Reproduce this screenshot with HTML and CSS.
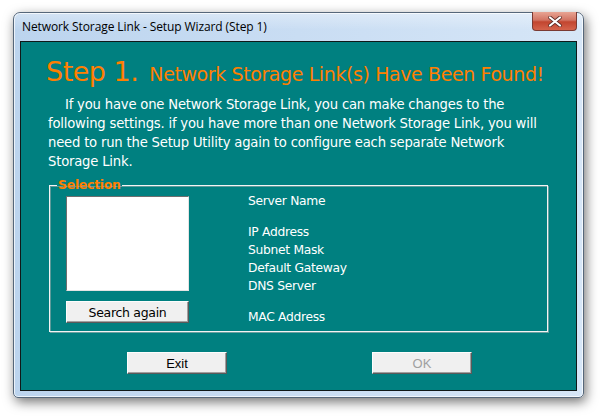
FILE: index.html
```html
<!DOCTYPE html>
<html>
<head>
<meta charset="utf-8">
<link rel="stylesheet" href="styles.css">
</head>
<body>
<div class="window">
  <div class="titlebar">
    <span class="title">Network Storage Link - Setup Wizard (Step 1)</span>
    <div class="close"><svg width="14" height="11" viewBox="0 0 14 11"><path d="M2 1.5 L12 9.5 M12 1.5 L2 9.5" stroke="#5a2a24" stroke-width="3.6" stroke-linecap="round"/><path d="M2 1.5 L12 9.5 M12 1.5 L2 9.5" stroke="#fff" stroke-width="2.2" stroke-linecap="round"/></svg></div>
  </div>
  <div class="client">
    <h1 class="heading"><span class="step">Step 1.</span><span class="found">Network Storage Link(s) Have Been Found!</span></h1>
    <p class="intro">If you have one Network Storage Link, you can make changes to the<br>following settings. if you have more than one Network Storage Link, you will<br>need to run the Setup Utility again to configure each separate Network<br>Storage Link.</p>
    <fieldset class="selection">
      <legend>Selection</legend>
      <div class="left-col">
        <div class="listbox"></div>
        <button class="btn search">Search again</button>
      </div>
      <div class="fields">
        <div class="field">Server Name</div>
        <div class="field gap">IP Address</div>
        <div class="field">Subnet Mask</div>
        <div class="field">Default Gateway</div>
        <div class="field">DNS Server</div>
        <div class="field gap">MAC Address</div>
      </div>
    </fieldset>
    <div class="actions">
      <button class="btn sys">Exit</button>
      <button class="btn sys disabled">OK</button>
    </div>
  </div>
</div>
</body>
</html>
```
FILE: styles.css
```css
* { box-sizing: border-box; }
body {
  margin: 0;
  background: #ffffff;
  width: 603px;
  height: 418px;
  overflow: hidden;
}
.window {
  margin: 12px 0 0 13px;
  width: 571px;
  height: 386px;
  border: 1px solid #56677a;
  border-radius: 7px 7px 5px 5px;
  background: linear-gradient(to right, #bcd4ee 0%, #c9ddf3 50%, #d6e6f7 100%);
  box-shadow: 2px 4px 12px rgba(0,0,0,0.55), inset 0 0 0 1px rgba(255,255,255,0.7);
}
.titlebar {
  height: 28px;
  display: flex;
  align-items: flex-start;
  justify-content: space-between;
  padding-left: 8px;
  background: linear-gradient(to bottom, rgba(255,255,255,0.35), rgba(255,255,255,0) 60%);
  border-radius: 6px 6px 0 0;
}
.title {
  font-family: "Open Sans", "Liberation Sans", sans-serif;
  font-size: 12px;
  color: #000;
  margin-top: 5px;
  letter-spacing: -0.1px;
}
.close {
  width: 45px;
  height: 19px;
  margin-right: 6px;
  margin-top: -1px;
  border: 1px solid #7a3a33;
  border-top: none;
  border-radius: 0 0 4px 4px;
  background: linear-gradient(to bottom, #e8a493 0%, #d27463 45%, #c2452f 55%, #d4634c 100%);
  display: flex;
  align-items: center;
  justify-content: center;
}
.client {
  margin: 0 6px 0 6px;
  height: 350px;
  border: 1px solid #101818;
  background: #008080;
  padding: 8px 0 0 0;
  font-family: "DejaVu Sans", sans-serif;
  color: #ffffff;
}
.heading {
  margin: 0 0 0 25px;
  font-weight: normal;
  color: #ff7f00;
  white-space: nowrap;
  line-height: 40px;
  letter-spacing: -0.5px;
}
.step { font-size: 27px; }
.found { font-size: 19px; letter-spacing: -0.4px; margin-left: 11px; }
.intro {
  margin: 1px 0 0 27px;
  font-size: 13.2px;
  line-height: 19px;
  text-indent: 17px;
  white-space: nowrap;
  letter-spacing: -0.2px;
}
.selection {
  margin: 8px 0 0 28px;
  width: 499px;
  height: 153px;
  padding: 4px 0 0 16px;
  border: 1px solid #f4f4f4;
  box-shadow: 1px 1px 0 #6aa0a0, inset 1px 1px 0 #5d9a9a;
  display: flex;
  gap: 59px;
  min-width: 0;
}
.selection legend {
  font-size: 12.5px;
  font-weight: bold;
  color: #ff7f00;
  padding: 0 1px;
  margin-left: -9px;
  letter-spacing: -0.3px;
  line-height: 12px;
}
.left-col {
  display: flex;
  flex-direction: column;
  gap: 10px;
  width: 123px;
  padding-top: 1px;
}
.listbox {
  height: 95px;
  background: #fff;
  border: 1px solid;
  border-color: #6e6e6e #e4e4e4 #e4e4e4 #6e6e6e;
}
.btn {
  background: #f0f0f0;
  border: 1px solid;
  border-color: #fdfdfd #5a5a5a #5a5a5a #fdfdfd;
  box-shadow: inset -1px -1px 0 #a0a0a0;
  padding: 0;
  color: #000;
  display: flex;
  align-items: center;
  justify-content: center;
}
.search {
  height: 22px;
  width: 123px;
  font-family: "DejaVu Sans", sans-serif;
  font-size: 12.5px;
  letter-spacing: -0.3px;
}
.fields {
  display: flex;
  flex-direction: column;
  font-size: 12.3px;
  line-height: 18px;
  letter-spacing: -0.3px;
  margin-top: -3px;
}
.field.gap { margin-top: 13px; }
.actions {
  display: flex;
  gap: 145px;
  margin: 20px 0 0 106px;
}
.sys {
  width: 100px;
  height: 22px;
  font-family: "Liberation Sans", "DejaVu Sans", sans-serif;
  font-size: 13px;
}
.disabled { color: #a0a0a0; }
```
